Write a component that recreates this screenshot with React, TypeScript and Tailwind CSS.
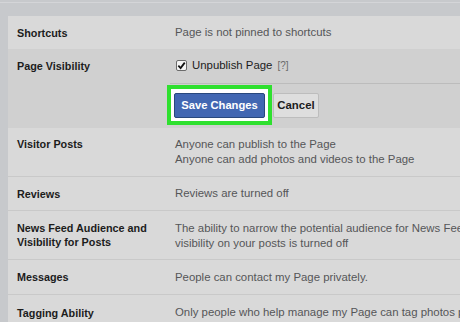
import React from "react";

const font = { fontFamily: '"Liberation Sans", Arial, sans-serif' };

function Row({
  label,
  children,
  className = "",
}: {
  label: React.ReactNode;
  children: React.ReactNode;
  className?: string;
}) {
  return (
    <div className={`flex border-b border-[#c9c9c9] bg-[#d9d9d9] ${className}`}>
      <div className="w-[167px] shrink-0 pl-[9px] text-[10.8px] font-bold leading-[14px] text-[#1c1c1c]">
        {label}
      </div>
      <div className="text-[11.4px] leading-[15px] text-[#555658] whitespace-nowrap">{children}</div>
    </div>
  );
}

export default function App() {
  return (
    <div
      className="w-[460px] h-[322px] overflow-hidden bg-[#c7c9cc] pl-[8px] pt-[16px] relative"
      style={font}
    >
      <div className="absolute left-0 right-0 top-[2px] h-px bg-[#d4d5d8]" />
      <div className="bg-[#d9d9d9] h-full">
        {/* Shortcuts */}
        <Row label="Shortcuts" className="h-[33px] items-center border-b-0">
          Page is not pinned to shortcuts
        </Row>

        {/* Page Visibility */}
        <div className="bg-[#d0d0d0] h-[79px] flex flex-col">
          <div className="flex h-[34px] items-center">
            <div className="w-[167px] shrink-0 pl-[9px] text-[10.8px] font-bold text-[#1c1c1c]">
              Page Visibility
            </div>
            <div className="flex items-center text-[11.4px] text-[#1c1c1c]">
              <span className="ml-[1px] mr-[5px] flex h-[11px] w-[11px] items-center justify-center rounded-[2px] border border-[#6b6b6b] bg-[#f4f4f4]">
                <svg width="9" height="9" viewBox="0 0 10 10">
                  <path d="M1.5 5.2 L4 7.8 L8.6 1.8" fill="none" stroke="#111" strokeWidth="2" />
                </svg>
              </span>
              <span>Unpublish Page</span>
              <span className="ml-[5px] text-[10px] text-[#6a6a6a]">[?]</span>
            </div>
          </div>
          <div className="ml-[162px] h-px bg-[#bcbcbc]" />
          <div className="flex items-start pt-[1px] pl-[159px]">
            <div className="border-[4px] border-[#2fe02f] bg-white p-[3px] pb-[3px]">
              <button className="h-[25px] w-[91px] rounded-[2px] border border-[#29487d] bg-[#4267b2] text-[11.2px] font-bold text-white">
                Save Changes
              </button>
            </div>
            <button className="ml-[1px] mt-[8px] h-[25px] w-[46px] rounded-[2px] border border-[#bdbdbd] bg-[#dedede] text-[11.4px] font-bold text-[#1c1c1c]">
              Cancel
            </button>
          </div>
        </div>

        <Row label="Visitor Posts" className="h-[49px] pt-[9px]">
          <div>Anyone can publish to the Page</div>
          <div>Anyone can add photos and videos to the Page</div>
        </Row>
        <Row label="Reviews" className="h-[34px] items-center">
          Reviews are turned off
        </Row>
        <Row label={<>News Feed Audience and<br />Visibility for Posts</>} className="h-[49px] pt-[10px]">
          <div>The ability to narrow the potential audience for News Feed and</div>
          <div>visibility on your posts is turned off</div>
        </Row>
        <Row label="Messages" className="h-[35px] items-center">
          People can contact my Page privately.
        </Row>
        <Row label="Tagging Ability" className="h-[35px] items-center border-b-0">
          Only people who help manage my Page can tag photos posted on it.
        </Row>
      </div>
    </div>
  );
}
